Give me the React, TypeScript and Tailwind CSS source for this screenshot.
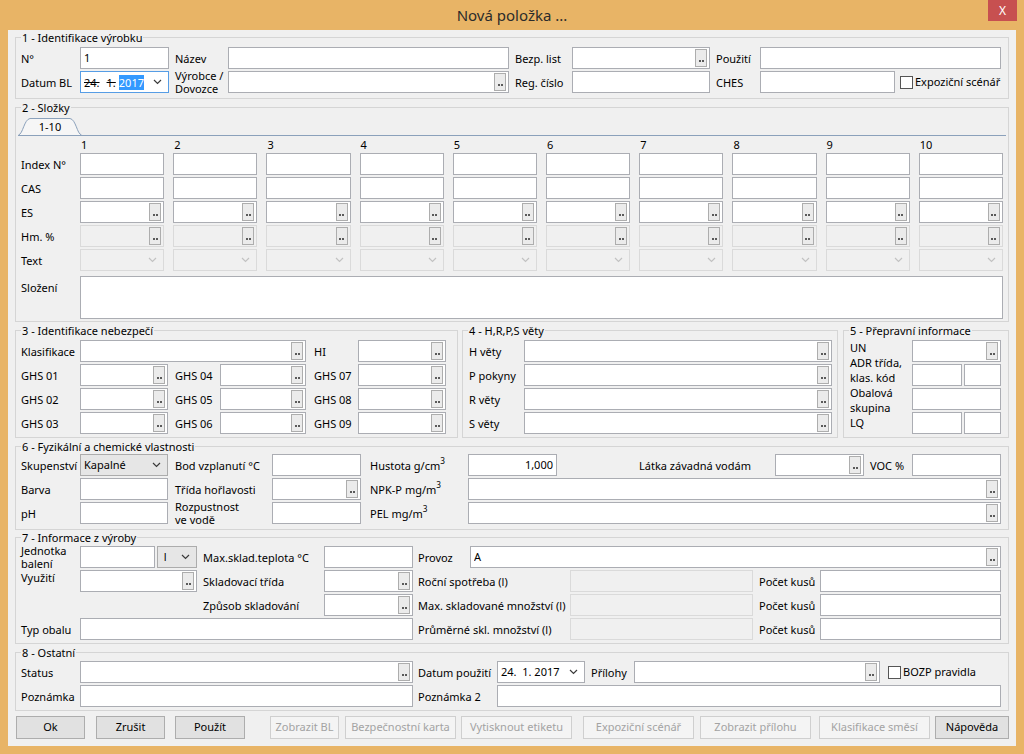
import { clsx } from "clsx";
import type { ReactNode } from "react";

const FONT = "font-['Noto_Sans',sans-serif]";
const COLS = [1, 2, 3, 4, 5, 6, 7, 8, 9, 10];

type Kids = { className?: string; children?: ReactNode };

// ── Small controls ─────────────────────────────────────────────────────────────

function Dots() {
  return (
    <span className="ml-auto flex h-[18px] w-[12px] shrink-0 items-end justify-center gap-[1px] border border-[#adadad] bg-[#ebebeb] pb-[4px]">
      <i className="h-[2px] w-[2px] bg-[#5a5a5a]" />
      <i className="h-[2px] w-[2px] bg-[#5a5a5a]" />
    </span>
  );
}

function Chevron({ muted }: { muted?: boolean }) {
  return (
    <svg width="9" height="6" viewBox="0 0 9 6" className="ml-auto shrink-0">
      <path d="M1 1l3.5 3.5L8 1" fill="none" stroke={muted ? "#c2c2c2" : "#3a3a3a"} strokeWidth="1.2" />
    </svg>
  );
}

function Box({ className, children, dots, off, right }: Kids & { dots?: boolean; off?: boolean; right?: boolean }) {
  return (
    <div
      className={clsx(
        "flex h-[22px] shrink-0 items-center border pl-[3px] pr-[2px]",
        off ? "border-[#dadada] bg-[#f0f0f0]" : "border-[#abadb3] bg-white",
        className
      )}
    >
      <span className={clsx("min-w-0 flex-1 truncate leading-[16px]", right && "pr-[1px] text-right")}>{children}</span>
      {dots && <Dots />}
    </div>
  );
}

function Combo({ className, children, off, gray }: Kids & { off?: boolean; gray?: boolean }) {
  return (
    <div
      className={clsx(
        "flex h-[22px] shrink-0 items-center border pl-[3px] pr-[6px]",
        off ? "border-[#dadada] bg-[#f0f0f0]" : gray ? "border-[#acacac] bg-[#e6e6e6]" : "border-[#abadb3] bg-white",
        className
      )}
    >
      <span className="truncate whitespace-pre leading-[16px]">{children}</span>
      <Chevron muted={off} />
    </div>
  );
}

function Label({ className, children }: Kids) {
  return (
    <div className={clsx("flex h-[22px] shrink-0 items-center whitespace-nowrap leading-[13px]", className)}>
      {children}
    </div>
  );
}

function Check({ label, className }: { label: string; className?: string }) {
  return (
    <div className={clsx("flex h-[22px] items-center", className)}>
      <span className="h-[13px] w-[13px] shrink-0 border border-[#555] bg-white" />
      <span className="ml-[2px] whitespace-nowrap">{label}</span>
    </div>
  );
}

function Group({ title, className, children }: Kids & { title: string }) {
  return (
    <fieldset className={clsx("min-w-0 border border-[#d5d5d5]", className)}>
      <legend className="ml-[5px] px-[1px] leading-[15px]">{title}</legend>
      {children}
    </fieldset>
  );
}

function Btn({ className, children, off }: Kids & { off?: boolean }) {
  return (
    <button
      type="button"
      className={clsx(
        "flex h-[23px] shrink-0 items-center justify-center border",
        off ? "border-[#cfcfcf] bg-[#f4f4f4] text-[#a3a3a3]" : "border-[#adadad] bg-[#e1e1e1] text-black",
        className
      )}
    >
      {children}
    </button>
  );
}

function Tab() {
  return (
    <div className="relative flex h-[17px] w-[64px] items-center justify-center">
      <svg className="absolute inset-0" width="64" height="17" viewBox="0 0 64 17">
        <path d="M0.5 17 C5 16 6 1.5 12 0.5 L52 0.5 C58 1.5 59 16 63.5 17" fill="#f6f6f6" stroke="#8ba1bb" />
      </svg>
      <span className="relative pt-[1px]">1-10</span>
    </div>
  );
}

// ── Dialog ─────────────────────────────────────────────────────────────────────

export default function App() {
  return (
    <div className={clsx(FONT, "flex h-[754px] w-[1024px] flex-col bg-[#e8b466] text-[11px] text-black")}>
      {/* Title bar */}
      <div className="grid h-[30px] shrink-0 grid-cols-[1fr_auto_1fr]">
        <div />
        <div className="text-[15px] leading-[30px] text-[#2b2b2b]">Nová položka ...</div>
        <div className="flex justify-end">
          <div className="mr-[7px] flex h-[21px] w-[29px] items-center justify-center bg-[#c75050] text-[12px] text-white">
            X
          </div>
        </div>
      </div>

      <div className="mx-[8px] flex h-[716px] flex-col bg-[#f0f0f0]">
        {/* 1 */}
        <Group title="1 - Identifikace výrobku" className="mx-[7px] pb-[5px] pt-[2px]">
          <div className="flex flex-col gap-[2px] pl-[5px]">
            <div className="flex">
              <Label className="w-[59px]">N°</Label>
              <Box className="w-[89px]">1</Box>
              <Label className="w-[59px] pl-[6px]">Název</Label>
              <Box className="w-[281px]" />
              <Label className="w-[63px] pl-[6px]">Bezp. list</Label>
              <Box className="w-[138px]" dots />
              <Label className="w-[50px] pl-[6px]">Použití</Label>
              <Box className="w-[241px]" />
            </div>
            <div className="flex">
              <Label className="w-[59px]">Datum BL</Label>
              <div className="flex h-[22px] w-[89px] shrink-0 items-center border border-[#569de5] bg-white pl-[3px] pr-[6px] leading-[15px]">
                <span className="line-through">24.</span>
                <span className="ml-[7px] line-through">1.</span>
                <span className="ml-[3px] bg-[#3399ff] text-white">2017</span>
                <Chevron />
              </div>
              <Label className="w-[59px] pl-[6px]">
                Výrobce /<br />Dovozce
              </Label>
              <Box className="w-[281px]" dots />
              <Label className="w-[63px] pl-[6px]">Reg. číslo</Label>
              <Box className="w-[138px]" />
              <Label className="w-[50px] pl-[6px]">CHES</Label>
              <Box className="w-[135px]" />
              <Check label="Expoziční scénář" className="ml-[5px]" />
            </div>
          </div>
        </Group>

        {/* 2 */}
        <Group title="2 - Složky" className="mx-[7px] mt-[1px] pb-[2px]">
          <div className="mx-[2px] flex h-[21px] items-end border-b border-[#8ba1bb]">
            <Tab />
          </div>
          <div className="flex flex-col gap-[2px] pl-[5px]">
            <div className="flex h-[15px] items-end">
              <div className="w-[59px] shrink-0" />
              <div className="grid w-[923px] grid-cols-10 gap-x-[9px] leading-[13px]">
                {COLS.map((c) => (
                  <span key={c} className="pl-[1px]">{c}</span>
                ))}
              </div>
            </div>
            {[
              { label: "Index N°", dots: false, off: false },
              { label: "CAS", dots: false, off: false },
              { label: "ES", dots: true, off: false },
              { label: "Hm. %", dots: true, off: true },
            ].map((r) => (
              <div key={r.label} className="flex">
                <Label className="w-[59px]">{r.label}</Label>
                <div className="grid w-[923px] grid-cols-10 gap-x-[9px]">
                  {COLS.map((c) => (
                    <Box key={c} dots={r.dots} off={r.off} />
                  ))}
                </div>
              </div>
            ))}
            <div className="flex">
              <Label className="w-[59px]">Text</Label>
              <div className="grid w-[923px] grid-cols-10 gap-x-[9px]">
                {COLS.map((c) => (
                  <Combo key={c} off />
                ))}
              </div>
            </div>
            <div className="mt-[3px] flex">
              <div className="w-[59px] shrink-0 pt-[4px] leading-[15px]">Složení</div>
              <div className="h-[43px] w-[923px] border border-[#abadb3] bg-white" />
            </div>
          </div>
        </Group>

        {/* 3, 4, 5 */}
        <div className="mx-[7px] mt-[1px] flex">
          <Group title="3 - Identifikace nebezpečí" className="w-[443px] shrink-0 pb-[3px] pt-[2px]">
            <div className="flex flex-col gap-[2px] pl-[5px]">
              <div className="flex">
                <Label className="w-[59px]">Klasifikace</Label>
                <Box className="w-[226px]" dots />
                <Label className="w-[52px] pl-[8px]">HI</Label>
                <Box className="w-[88px]" dots />
              </div>
              {[
                ["GHS 01", "GHS 04", "GHS 07"],
                ["GHS 02", "GHS 05", "GHS 08"],
                ["GHS 03", "GHS 06", "GHS 09"],
              ].map(([a, b, c]) => (
                <div key={a} className="flex">
                  <Label className="w-[59px]">{a}</Label>
                  <Box className="w-[88px]" dots />
                  <Label className="w-[52px] pl-[7px]">{b}</Label>
                  <Box className="w-[86px]" dots />
                  <Label className="w-[52px] pl-[8px]">{c}</Label>
                  <Box className="w-[88px]" dots />
                </div>
              ))}
            </div>
          </Group>

          <Group title="4 - H,R,P,S věty" className="ml-[4px] w-[376px] shrink-0 pb-[3px] pt-[2px]">
            <div className="flex flex-col gap-[2px] pl-[6px]">
              {["H věty", "P pokyny", "R věty", "S věty"].map((l) => (
                <div key={l} className="flex">
                  <Label className="w-[55px]">{l}</Label>
                  <Box className="w-[308px]" dots />
                </div>
              ))}
            </div>
          </Group>

          <Group title="5 - Přepravní informace" className="ml-[5px] w-[166px] shrink-0 pb-[3px] pt-[2px]">
            <div className="flex pl-[6px]">
              {/* labels run as one column of lines, as in the original */}
              <div className="flex w-[62px] shrink-0 flex-col leading-[15px]">
                <span>UN</span>
                <span>ADR třída,</span>
                <span>klas. kód</span>
                <span>Obalová</span>
                <span>skupina</span>
                <span>LQ</span>
              </div>
              <div className="flex flex-col gap-[2px]">
                <Box className="w-[89px]" dots />
                <div className="flex">
                  <Box className="w-[50px]" />
                  <Box className="ml-[2px] w-[37px]" />
                </div>
                <Box className="w-[89px]" />
                <div className="flex">
                  <Box className="w-[50px]" />
                  <Box className="ml-[2px] w-[37px]" />
                </div>
              </div>
            </div>
          </Group>
        </div>

        {/* 6 */}
        <Group title="6 - Fyzikální a chemické vlastnosti" className="mx-[7px] mt-[1px] pb-[5px]">
          <div className="flex flex-col gap-[2px] pl-[5px]">
            <div className="flex">
              <Label className="w-[59px]">Skupenství</Label>
              <Combo gray className="w-[88px]">Kapalné</Combo>
              <Label className="w-[104px] pl-[7px]">Bod vzplanutí °C</Label>
              <Box className="w-[89px]" />
              <Label className="w-[107px] pl-[9px]">
                Hustota g/cm<sup>3</sup>
              </Label>
              <Box className="w-[89px]" right>1,000</Box>
              <Label className="w-[218px] pl-[82px]">Látka závadná vodám</Label>
              <Box className="w-[89px]" dots />
              <Label className="w-[48px] pl-[6px]">VOC %</Label>
              <Box className="w-[89px]" />
            </div>
            <div className="flex">
              <Label className="w-[59px]">Barva</Label>
              <Box className="w-[88px]" />
              <Label className="w-[104px] pl-[7px]">Třída hořlavosti</Label>
              <Box className="w-[89px]" dots />
              <Label className="w-[107px] pl-[9px]">
                NPK-P mg/m<sup>3</sup>
              </Label>
              <Box className="w-[533px]" dots />
            </div>
            <div className="flex">
              <Label className="w-[59px]">pH</Label>
              <Box className="w-[88px]" />
              <Label className="w-[104px] pl-[7px]">
                Rozpustnost<br />ve vodě
              </Label>
              <Box className="w-[89px]" />
              <Label className="w-[107px] pl-[9px]">
                PEL mg/m<sup>3</sup>
              </Label>
              <Box className="w-[533px]" dots />
            </div>
          </div>
        </Group>

        {/* 7 */}
        <Group title="7 - Informace z výroby" className="mx-[7px] pb-[3px] pt-[1px]">
          <div className="flex flex-col gap-[2px] pl-[5px]">
            <div className="flex">
              <Label className="w-[59px]">
                Jednotka<br />balení
              </Label>
              <Box className="w-[75px]" />
              <Combo gray className="ml-[2px] w-[40px]">
                {" l"}
              </Combo>
              <Label className="w-[127px] pl-[6px]">Max.sklad.teplota °C</Label>
              <Box className="w-[89px]" />
              <Label className="w-[57px] pl-[5px]">Provoz</Label>
              <Box className="w-[531px]" dots>
                A
              </Box>
            </div>
            <div className="flex">
              <div className="h-[22px] w-[59px] shrink-0 pt-[1px] leading-[13px]">Využití</div>
              <Box className="w-[117px]" dots />
              <Label className="w-[127px] pl-[6px]">Skladovací třída</Label>
              <Box className="w-[89px]" dots />
              <Label className="w-[157px] pl-[5px]">Roční spotřeba (l)</Label>
              <Box className="w-[183px]" off />
              <Label className="w-[67px] pl-[6px]">Počet kusů</Label>
              <Box className="w-[181px]" />
            </div>
            <div className="flex">
              <div className="w-[176px] shrink-0" />
              <Label className="w-[127px] pl-[6px]">Způsob skladování</Label>
              <Box className="w-[89px]" dots />
              <Label className="w-[157px] pl-[5px]">Max. skladované množství (l)</Label>
              <Box className="w-[183px]" off />
              <Label className="w-[67px] pl-[6px]">Počet kusů</Label>
              <Box className="w-[181px]" />
            </div>
            <div className="flex">
              <Label className="w-[59px]">Typ obalu</Label>
              <Box className="w-[333px]" />
              <Label className="w-[157px] pl-[5px]">Průměrné skl. množství (l)</Label>
              <Box className="w-[183px]" off />
              <Label className="w-[67px] pl-[6px]">Počet kusů</Label>
              <Box className="w-[181px]" />
            </div>
          </div>
        </Group>

        {/* 8 */}
        <Group title="8 - Ostatní" className="mx-[7px] mt-[1px] pb-[3px] pt-[1px]">
          <div className="flex flex-col gap-[2px] pl-[5px]">
            <div className="flex">
              <Label className="w-[59px]">Status</Label>
              <Box className="w-[333px]" dots />
              <Label className="w-[84px] pl-[5px]">Datum použití</Label>
              <Combo className="w-[88px]">{"24.  1. 2017"}</Combo>
              <Label className="w-[49px] pl-[6px]">Přílohy</Label>
              <Box className="w-[246px]" dots />
              <Check label="BOZP pravidla" className="ml-[8px]" />
            </div>
            <div className="flex">
              <Label className="w-[59px]">Poznámka</Label>
              <Box className="w-[333px]" />
              <Label className="w-[84px] pl-[5px]">Poznámka 2</Label>
              <Box className="w-[504px]" />
            </div>
          </div>
        </Group>

        {/* Buttons */}
        <div className="mt-[5px] flex pl-[8px]">
          <Btn className="w-[69px]">Ok</Btn>
          <Btn className="ml-[11px] w-[69px]">Zrušit</Btn>
          <Btn className="ml-[10px] w-[70px]">Použít</Btn>
          <Btn off className="ml-[25px] w-[69px]">Zobrazit BL</Btn>
          <Btn off className="ml-[6px] w-[111px]">Bezpečnostní karta</Btn>
          <Btn off className="ml-[5px] w-[111px]">Vytisknout etiketu</Btn>
          <Btn off className="ml-[11px] w-[111px]">Expoziční scénář</Btn>
          <Btn off className="ml-[6px] w-[111px]">Zobrazit přílohu</Btn>
          <Btn off className="ml-[8px] w-[111px]">Klasifikace směsí</Btn>
          <Btn className="ml-[5px] w-[74px]">Nápověda</Btn>
        </div>
      </div>
    </div>
  );
}
